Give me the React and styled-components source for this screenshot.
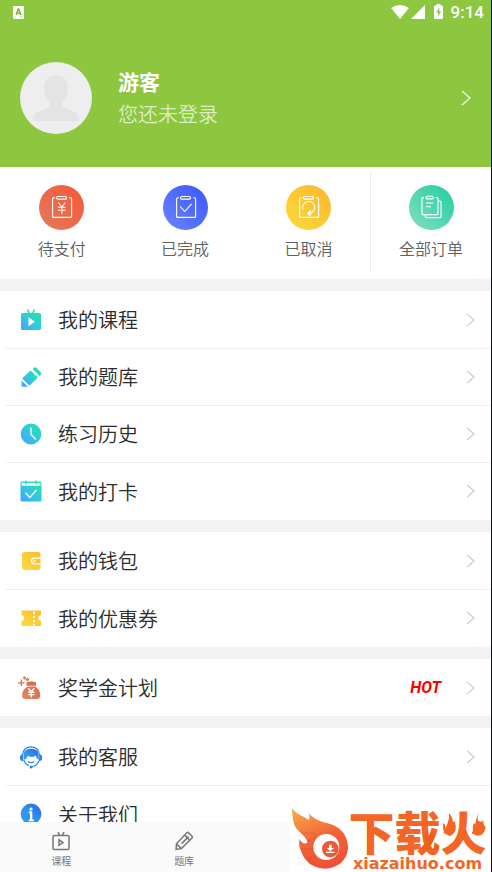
import React from "react";
import styled, { createGlobalStyle } from "styled-components";

const orders = [
  { name: "待支付", icon: "pay", from: "#e07c5c", to: "#fb5638" },
  { name: "已完成", icon: "done", from: "#6a86fc", to: "#3b55fb" },
  { name: "已取消", icon: "cancel", from: "#f8dc3c", to: "#fdb52c" },
  { name: "全部订单", icon: "all", from: "#86dfbc", to: "#1fcda4" },
];

const groups = [
  [
    { name: "我的课程", icon: "course" },
    { name: "我的题库", icon: "bank" },
    { name: "练习历史", icon: "history" },
    { name: "我的打卡", icon: "checkin" },
  ],
  [
    { name: "我的钱包", icon: "wallet" },
    { name: "我的优惠券", icon: "coupon" },
  ],
  [{ name: "奖学金计划", icon: "money", tag: "HOT" }],
  [
    { name: "我的客服", icon: "service" },
    { name: "关于我们", icon: "about" },
  ],
];

const tabs = [
  { name: "课程", icon: "course" },
  { name: "题库", icon: "bank" },
  { name: "发现", icon: "find" },
  { name: "我的", icon: "me", active: true },
];

const board = (
  <>
    <path d="M16 12.8h-1.4q-1 0-1 1v17.6q0 1 1 1h17q1 0 1-1V13.8q0-1-1-1h-1.4" />
    <rect x="17.5" y="11.5" width="10" height="2.6" rx="1" />
  </>
);

const orderIcons = {
  pay: (
    <>
      {board}
      <path d="M19.3 17.5l3.5 4.5 3.5-4.5M22.8 22v7M19 22.3h7.6M19 25.3h7.6" />
    </>
  ),
  done: (
    <>
      {board}
      <path d="M17.3 21.7l4.4 4.8 6.9-7.7" />
    </>
  ),
  cancel: (
    <>
      {board}
      <path d="M17 24.5a6 6 0 1 1 8.6 3.2q-1.4.8-3.2.6" />
      <path d="M24.2 25.8l-2.4 2.4 2.2 2.4z" fill="#fff" />
    </>
  ),
  all: (
    <>
      <path d="M15 12.6h-1q-1 0-1 1v15q0 1 1 1h14q1 0 1-1v-15q0-1-1-1h-1.4" />
      <rect x="17.2" y="11.3" width="7" height="2.6" rx="1" />
      <path d="M17 18h7.6M17 21.8h5M29 16h2q1 0 1 1v14.6q0 1-1 1H17.4q-1 0-1-1V29.8" />
    </>
  ),
};

const menuIcons = {
  course: (
    <>
      <path d="M7.5.5l2 4M14.5.5l-2 4" stroke="#25dfaa" strokeWidth="1.6" />
      <rect x="1" y="4" width="20" height="17" rx="1.6" fill="url(#aqua)" />
      <path d="M8.5 8.2v9l6.4-4.500z" fill="#fff" />
    </>
  ),
  bank: (
    <>
      <path d="M13.4 2.2q1.500-1.700 3.100-.2l4.200 4.300q1.200 1.400-.2 2.900l-.8.8L12.600 3z" fill="#26dea8" />
      <path d="M10.600 4.400l7.200 7.200-8.300 8.100-7.300-7.300z" fill="url(#aqua)" />
      <path d="M1.600 14.400l6.300 6.300H2.600q-1 0-1-1z" fill="#42a5f8" />
    </>
  ),
  history: (
    <>
      <circle cx="11" cy="11" r="10.4" fill="url(#aqua)" />
      <path d="M11 4.500v7l5 5" stroke="#fff" strokeWidth="1.3" />
    </>
  ),
  checkin: (
    <>
      <rect x=".5" y="1.500" width="21" height="20" rx="1.500" fill="url(#aqua)" />
      <path d="M1.600 2.900h18.800v2.800H1.600z" fill="#fff" />
      <path d="M6 .5v4M16 .5v4" stroke="#25dfaa" strokeWidth="1.3" />
      <path d="M5.500 12.800l4.300 4.700 6.700-7.500" stroke="#fff" strokeWidth="1.3" />
    </>
  ),
  wallet: (
    <>
      <rect x="2" y="2" width="18.5" height="18" rx="2.400" fill="url(#gold)" />
      <path d="M21 8.200h-7q-2.400.3-2.500 2.900.1 2.500 2.500 2.800h7" stroke="#fff" strokeWidth="1.3" />
      <circle cx="14.5" cy="11" r="1" fill="#fff" />
    </>
  ),
  coupon: (
    <>
      <path
        d="M2 3.500h18.500q.5 0 .5.600v4.200a2.700 2.700 0 0 0 0 5.400v4.800q0 .5-.5.500H2q-.5 0-.5-.5v-4.800a2.700 2.700 0 0 0 0-5.400V4.100q0-.6.500-.6z"
        fill="url(#gold)"
      />
      <path d="M14 4.500v14" stroke="#fff" strokeWidth="1.800" strokeDasharray="2.400 1.800" />
    </>
  ),
  money: (
    <>
      <path d="M1.300 2.600v6.400M-1.900 5.800h6.400M4.500-.5v3M3 1h3M7.500.8v3.400M5.800 2.500h3.400" stroke="#df7150" strokeWidth="1.3" />
      <path d="M6.500 5.500q1.500-1.200 3.500-.700 1.500-1.200 3 0 2-.4 3 .7v3.200H6.500z" fill="#dc6e50" />
      <path d="M7.500 9.500h7.700Q20.600 13 20.200 19q-.3 3-3.200 3H5.200q-3 0-3.100-3Q1.800 13 7.500 9.500z" fill="url(#brick)" />
      <path d="M8.300 11.300l3 3.500 3-3.500M11.300 14.800v5.400M8.200 15.300h6.200M8.200 17.600h6.200" stroke="#fff" strokeWidth="1.4" />
    </>
  ),
  service: (
    <>
      <path d="M2.500 9Q3.500.8 11 .8T19.500 9" stroke="#2e83ed" strokeWidth="1.2" />
      <path
        d="M4 14Q1.500 2.800 11 2.800T18.300 14Q16.500 12.500 15.800 9.500 11.500 12.500 8 9.800 7.300 12.500 4 14z"
        fill="url(#blue)"
      />
      <path
        d="M2.800 8q-3 .8-2.900 3.900.2 3.300 3.500 3.100zM19.300 8q3 .8 2.900 3.900-.2 3.300-3.500 3.100z"
        fill="#2e83ed"
      />
      <path d="M3.800 14q1.500 4.400 5 5.600M18.800 15q-2 5-7 6" stroke="#2e83ed" strokeWidth="1.2" />
      <path d="M8 15.500q3 2.200 6 0" stroke="#2e83ed" strokeWidth="1.2" />
      <circle cx="11" cy="21" r="1.500" fill="#2e83ed" />
    </>
  ),
  about: (
    <>
      <circle cx="11" cy="11" r="10.400" fill="url(#blue)" />
      <circle cx="11" cy="6" r="1.600" fill="#fff" />
      <path d="M8.800 9.300H11V17M8.800 17.300h5" stroke="#fff" strokeWidth="1.8" />
      <path d="M11.200 8.400V17" stroke="#fff" strokeWidth="2.200" />
    </>
  ),
};

const tabIcons = {
  course: (
    <>
      <rect x="2" y="4.5" width="16" height="14" rx="1.2" />
      <path d="M7 1.200l1.500 3M13 1.200l-1.500 3M8 8.800v5.600l4-2.800z" />
    </>
  ),
  bank: (
    <path d="M12.800 1.800q.9-.8 1.800 0l3.400 3.400q.8.9 0 1.800L7.400 17.600l-5.300.8.400-5.600zM10.600 4.100l5.200 5.200M2.700 13l4.600 4.500M14.600 5.600l-7 7" />
  ),
  find: (
    <>
      <rect x="2" y="2" width="16" height="16" rx="3" />
      <path d="M6 8l4 4 4-4" />
    </>
  ),
  me: (
    <path
      d="M10 1q5 .5 4.500 6-.5 3-2.500 5 6 1.500 7 6H1q1-4.500 7-6-2-2-2.500-5Q5 1.500 10 1z"
      fill="currentColor"
    />
  ),
};

const Arrow = ({ large }) => (
  <Chevron large={large} viewBox="0 0 10 16" aria-hidden="true">
    <path d="M1 1l8 7-8 7" />
  </Chevron>
);

const Gradients = () => (
  <HiddenSvg aria-hidden="true">
    <defs>
      {[
        ["aqua", "#43a2fb", "#32c8e2", "#20ea91"],
        ["gold", "#fadb3e", "#fccb38", "#fdb92d"],
        ["brick", "#df8b6b", "#df7858", "#e66a49"],
        ["blue", "#34a4e8", "#2f91ea", "#2461e8"],
        ["fire", "#ee3f23", "#f0582a", "#f89a34"],
      ].map(([id, a, b, c]) => (
        <linearGradient
          key={id}
          id={id}
          x1={id === "fire" ? "0.7" : "0"}
          y1="1"
          x2={id === "fire" ? "0.3" : "1"}
          y2="0"
        >
          <stop offset="0" stopColor={a} />
          <stop offset="0.5" stopColor={b} />
          <stop offset="1" stopColor={c} />
        </linearGradient>
      ))}
    </defs>
  </HiddenSvg>
);

const StatusBar = () => (
  <Status>
    <svg width="11" height="13" viewBox="0 0 11 13" aria-hidden="true">
      <rect width="11" height="13" rx="1" fill="#fff" />
      <path d="M3 9l2.300-6h.5L8 9M3.800 7.200h3.600" stroke="#7fb53a" strokeWidth="1.5" fill="none" />
      <path d="M6 11h4" stroke="#c3dfa0" />
    </svg>
    <StatusRight>
      <svg width="52" height="16" viewBox="0 0 52 16" fill="#fff" aria-hidden="true">
        <path d="M0 4Q9-2 18 4L9 15z" />
        <path d="M34 1v14H20z" />
        <path d="M45.500 0h4v1.500H51q1 0 1 1V14q0 1-1 1h-7q-1 0-1-1V2.500q0-1 1-1h1.500z" />
        <path d="M48.500 3.500l-3.500 5h2v4l3.200-5.200h-2z" fill="#8dc63f" />
      </svg>
      <time>9:14</time>
    </StatusRight>
  </Status>
);

const Watermark = () => (
  <Mark>
    <svg width="58" height="66" viewBox="15 18 174 198" aria-hidden="true">
      <path
        d="M20 24C34 44 54 46 70 60 75 53 75 47 71 38 84 54 98 62 122 68 162 75 188 102 189 142 188 182 156 206 120 206 84 205 60 184 50 158 44 144 40 132 44 118 50 130 58 133 68 128 62 110 48 100 36 88 22 70 24 48 20 24z"
        fill="url(#fire)"
      />
      <circle cx="124" cy="141" r="39" fill="#fff" />
      <circle cx="136" cy="147" r="25" fill="#ee4a27" />
      <path d="M132 134h8v10h7l-11 10-11-10h7z" fill="#fff" />
      <path d="M123 157h26" stroke="#fff" strokeWidth="4" />
    </svg>
    <MarkText>
      <MarkName>
        下载火
        <Flames viewBox="0 0 42 24" aria-hidden="true">
          <path d="M7 0q5 5 3 11 2-1 2-4 4 10-3 14Q0 20 2 9q2 2 2 5 4-7 3-14zM34 0q-1 6 1 10 1-2 4-3-1 3 2 6-1 8-8 8-6-4-3-12 1 2 2 2 0-6 2-11z" />
        </Flames>
      </MarkName>
      <MarkUrl>xiazaihuo.com</MarkUrl>
    </MarkText>
  </Mark>
);

export default function App() {
  return (
    <Page>
      <GlobalStyle />
      <Gradients />
      <Content>
        <Header>
          <StatusBar />
          <Profile href="#login">
            <Avatar viewBox="0 0 72 72" aria-hidden="true">
              <circle cx="36" cy="36" r="36" fill="#eee" />
              <path
                d="M36 13c7 0 12 5 12 13 0 7-3 11-6 15-1 3 0 4 3 5 8 3 14 5 14 10 0 2-1 3-3 3H17c-3 0-4-1-4-3 0-5 7-7 14-10 3-1 4-2 3-5-3-4-6-8-6-15 0-8 5-13 12-13z"
                fill="#e4e4e4"
              />
            </Avatar>
            <UserText>
              <UserName>游客</UserName>
              <UserHint>您还未登录</UserHint>
            </UserText>
            <Arrow large />
          </Profile>
        </Header>
        <Orders>
          {orders.map((o) => (
            <Order key={o.name}>
              <Disc from={o.from} to={o.to}>
                <svg width="45" height="45" viewBox="0 0 45 45" aria-hidden="true">
                  {orderIcons[o.icon]}
                </svg>
              </Disc>
              {o.name}
            </Order>
          ))}
        </Orders>
        {groups.map((rows, i) => (
          <Group key={i}>
            {rows.map((r) => (
              <Row key={r.name}>
                <RowButton>
                  <MenuIcon viewBox="0 0 22 22" aria-hidden="true">
                    {menuIcons[r.icon]}
                  </MenuIcon>
                  {r.name}
                  {r.tag && <Tag>{r.tag}</Tag>}
                  <Arrow />
                </RowButton>
              </Row>
            ))}
          </Group>
        ))}
      </Content>
      <TabBar>
        {tabs.map((t) => (
          <Tab key={t.name} active={t.active}>
            <svg width="20" height="20" viewBox="0 0 20 20" aria-hidden="true">
              {tabIcons[t.icon]}
            </svg>
            {t.name}
          </Tab>
        ))}
      </TabBar>
      <Watermark />
    </Page>
  );
}

const GlobalStyle = createGlobalStyle`
  * {
    box-sizing: border-box;
  }
  body {
    margin: 0;
    background: #fff;
    font-family: Roboto, "Noto Sans CJK SC", sans-serif;
  }
  button {
    appearance: none;
    border: none;
    background: transparent;
    padding: 0;
    font-family: inherit;
    cursor: pointer;
  }
`;

const plain = { shouldForwardProp: (p) => !["large", "active", "from", "to"].includes(p) };

const Page = styled.div`
  position: relative;
  display: flex;
  flex-direction: column;
  height: 100vh;
  border-right: 1px solid #0b1016;
`;
const HiddenSvg = styled.svg`
  position: absolute;
  width: 0;
  height: 0;
`;
const Content = styled.main`
  flex: 1;
  min-height: 0;
  overflow-y: auto;
  background: #f3f3f3;
  scrollbar-width: none;
`;
const Header = styled.header`
  background: #8dc63f;
  color: #fff;
`;
const Status = styled.div`
  display: flex;
  align-items: center;
  justify-content: space-between;
  height: 24px;
  padding: 0 7px 0 13px;
`;
const StatusRight = styled.div`
  display: flex;
  align-items: center;
  gap: 8px;
  font-size: 17px;
  font-weight: 500;
`;
const Profile = styled.a`
  display: flex;
  align-items: center;
  height: 143px;
  padding: 4px 20px 0;
  color: inherit;
  text-decoration: none;
`;
const Avatar = styled.svg`
  width: 72px;
  height: 72px;
  margin-right: 26px;
`;
const UserText = styled.div`
  padding-top: 2px;
  font-size: 20px;
  line-height: 32px;
`;
const UserName = styled.div`
  font-size: 21px;
  font-weight: 700;
`;
const UserHint = styled.div`
  font-weight: 350;
  color: #dcedc5;
`;
const Chevron = styled.svg.withConfig(plain)`
  width: ${(p) => (p.large ? 10 : 9)}px;
  height: ${(p) => (p.large ? 16 : 14)}px;
  margin-left: auto;
  fill: none;
  stroke: ${(p) => (p.large ? "#f0f8e6" : "#c8c8c8")};
  stroke-width: 1.3;
`;
const Orders = styled.nav`
  display: grid;
  grid-template-columns: repeat(3, 1.02fr) 1fr;
  padding: 5px 0 7px;
  margin-bottom: 12px;
  background: #fff;
`;
const Order = styled.button`
  display: flex;
  flex-direction: column;
  align-items: center;
  gap: 8px;
  height: 100px;
  padding-top: 13px;
  font-size: 16px;
  line-height: 24px;
  font-weight: 350;
  color: #606060;
  &:last-child {
    border-left: 1px solid #ececec;
  }
`;
const Disc = styled.span.withConfig(plain)`
  width: 45px;
  height: 45px;
  border-radius: 50%;
  background: linear-gradient(45deg, ${(p) => p.from}, ${(p) => p.to});
  svg {
    display: block;
    fill: none;
    stroke: #fff;
    stroke-width: 1.1;
  }
`;
const Group = styled.ul`
  margin: 0 0 12px;
  padding: 0;
  list-style: none;
  background: #fff;
`;
const Row = styled.li`
  height: 57px;
  padding-left: 5px;
  & + & {
    background: linear-gradient(#efefef, #efefef) 5px 0 / 100% 1px no-repeat;
  }
  &:last-child:not(:first-child) {
    height: 58px;
  }
`;
const RowButton = styled.button`
  display: flex;
  align-items: center;
  width: 100%;
  height: 100%;
  padding: 0 16px 0 15px;
  font-size: 20px;
  font-weight: 350;
  color: #2c2c2c;
`;
const MenuIcon = styled.svg`
  width: 22px;
  height: 22px;
  margin-right: 16px;
  overflow: visible;
  fill: none;
`;
const Tag = styled.em`
  margin-left: auto;
  font-size: 16px;
  font-weight: 700;
  color: #fb0000;
  & + svg {
    margin-left: 25px;
  }
`;
const TabBar = styled.nav`
  display: grid;
  grid-template-columns: repeat(4, 1fr);
  height: 50px;
  background: #fafafa;
`;
const Tab = styled.button.withConfig(plain)`
  display: flex;
  flex-direction: column;
  align-items: center;
  gap: 4px;
  padding-top: 9px;
  font-size: 10px;
  line-height: 14px;
  color: ${(p) => (p.active ? "#8dc63f" : "#777")};
  svg {
    fill: none;
    stroke: currentColor;
    stroke-width: 1.5;
  }
`;
const Mark = styled.div`
  position: absolute;
  right: 0;
  bottom: 0;
  display: flex;
  align-items: flex-end;
  width: 201px;
  height: 66px;
  background: #fff;
  opacity: 0.92;
  pointer-events: none;
`;
const MarkText = styled.div`
  flex: 1;
  padding-right: 4px;
  color: #f45a14;
  text-align: center;
  white-space: nowrap;
`;
const MarkName = styled.div`
  position: relative;
  font-size: 46px;
  line-height: 42px;
  font-weight: 900;
`;
const Flames = styled.svg`
  position: absolute;
  right: 0;
  top: 0;
  width: 46px;
  height: 26px;
  fill: currentColor;
`;
const MarkUrl = styled.div`
  font-family: "DejaVu Sans", sans-serif;
  font-size: 16px;
  line-height: 17px;
  font-weight: 700;
`;
